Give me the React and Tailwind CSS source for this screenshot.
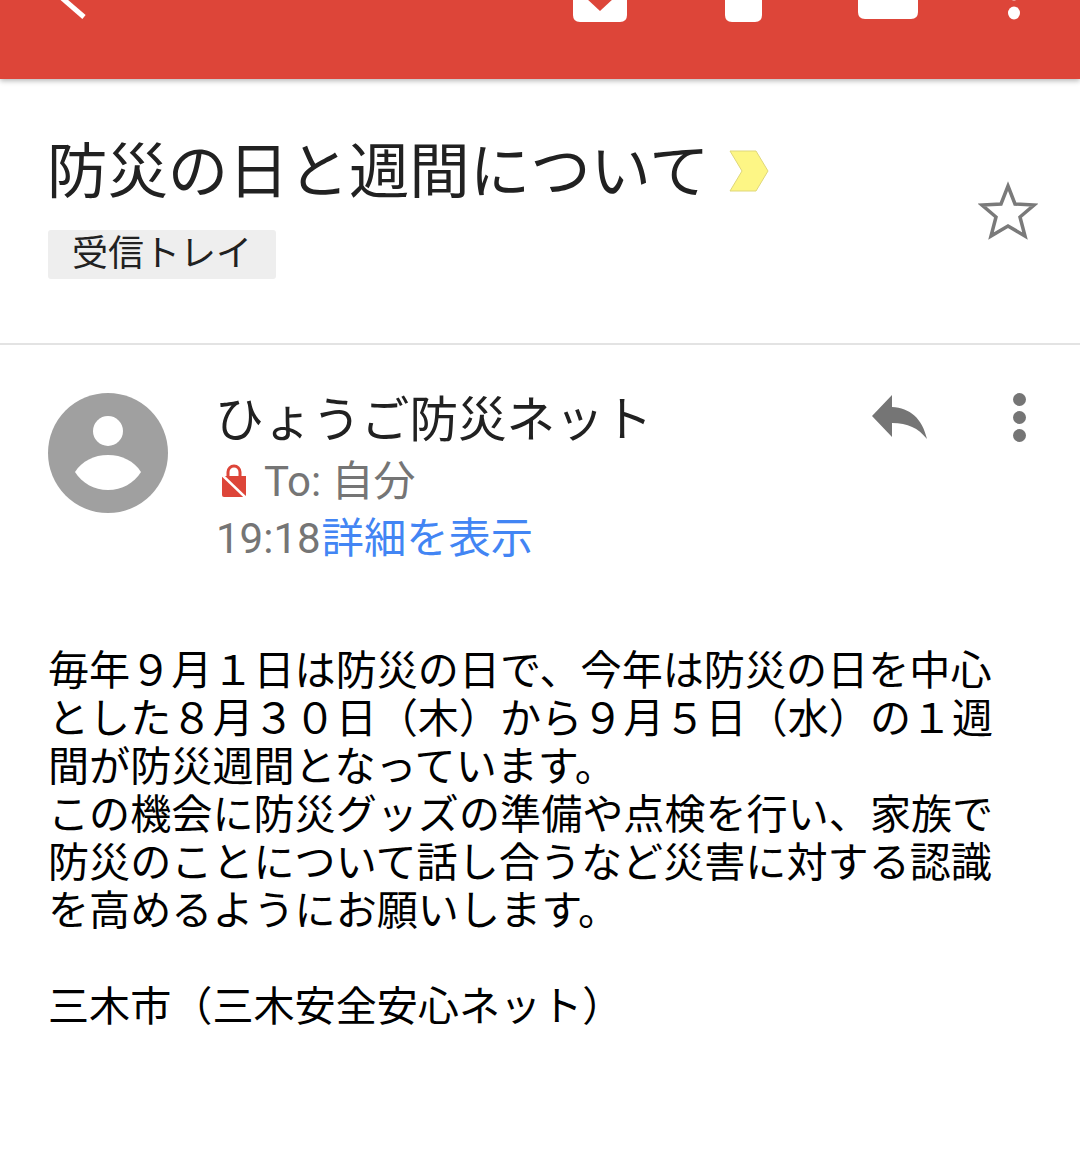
import React from "react";

const FONT = "font-['Roboto','Noto_Sans_CJK_JP',sans-serif]";

function TopIcons() {
  return (
    <svg width="1080" height="79" viewBox="0 0 1080 79" className="block" fill="#fff">
      <path d="M62 -2 L84 17" stroke="#fff" strokeWidth="5" fill="none" />
      <path d="M573 -5 H627 V15 Q627 22 620 22 H580 Q573 22 573 15 Z" />
      <path d="M586 -2 L600 11 L614 -2 Z" fill="#dd4539" />
      <path d="M725 -5 H762 V15 Q762 22 755 22 H732 Q725 22 725 15 Z" />
      <path d="M858 -5 H918 V12 Q918 19 911 19 H865 Q858 19 858 12 Z" />
      <ellipse cx="1014" cy="13" rx="6" ry="6.5" />
      <circle cx="1014" cy="-5.5" r="6" />
    </svg>
  );
}

function Avatar() {
  return (
    <svg width="120" height="120" viewBox="0 0 120 120" className="shrink-0">
      <circle cx="60" cy="60" r="60" fill="#a0a0a0" />
      <circle cx="60" cy="38" r="15" fill="#fff" />
      <path d="M27 79 C34 68 46 62 60 62 C74 62 86 68 93 79 C86 90 74 97 60 97 C46 97 34 90 27 79 Z" fill="#fff" />
    </svg>
  );
}

function LockOff() {
  return (
    <svg width="28" height="34" viewBox="0 0 28 34" className="shrink-0">
      <path d="M2 12 H26 V31 Q26 33 24 33 H4 Q2 33 2 31 Z" fill="#dd4539" />
      <path d="M8 13 V8 A6 6 0 0 1 20 8 V13" fill="none" stroke="#dd4539" strokeWidth="3" />
      <path d="M0 9 L26 34" stroke="#fff" strokeWidth="2.5" />
    </svg>
  );
}

const bodyLines = [
  "毎年９月１日は防災の日で、今年は防災の日を中心",
  "とした８月３０日（木）から９月５日（水）の１週",
  "間が防災週間となっています。",
  "この機会に防災グッズの準備や点検を行い、家族で",
  "防災のことについて話し合うなど災害に対する認識",
  "を高めるようにお願いします。",
  "\u00a0",
  "三木市（三木安全安心ネット）",
];

export default function App() {
  return (
    <div className={`${FONT} w-[1080px] h-[1157px] bg-white overflow-hidden text-[#212121]`}>
      <header className="h-[79px] bg-[#dd4539] shadow-[0_2px_5px_rgba(0,0,0,0.28)] relative">
        <TopIcons />
      </header>

      <section className="h-[266px] border-b-2 border-[#e3e3e3] pl-12 pr-[42px] pt-[55px] flex justify-between">
        <div>
          <div className="flex items-center h-[72px]">
            <h1 className="text-[60.4px] leading-[72px] font-normal whitespace-nowrap -ml-[1px] translate-y-[3px]">防災の日と週間について</h1>
            <svg width="40" height="42" viewBox="0 0 40 42" className="ml-[19px] mt-[2px]">
              <path d="M1 1 H27 L39 21 L27 41 H1 L13 21 Z" fill="#fdf685" stroke="#dfd77a" strokeWidth="1" />
            </svg>
          </div>
          <div className="mt-[24px] w-[228px] h-[49px] bg-[#eeeeee] rounded-[3px] flex items-center justify-center">
            <span className="text-[36px] leading-[48px] whitespace-nowrap -translate-y-[1px]">受信トレイ</span>
          </div>
        </div>
        <svg width="60" height="60" viewBox="0 0 60 60" className="mt-[47px]">
          <path d="M30 5 L37 23 L56 24 L42 36 L47 55 L30 45 L13 55 L18 36 L4 24 L23 23 Z" fill="none" stroke="#7a7a7a" strokeWidth="3.5" />
        </svg>
      </section>

      <section className="pl-12 pr-[54px] pt-[48px] flex">
        <Avatar />
        <div className="ml-[47px] flex-1 -mt-[2px]">
          <div className="text-[48.6px] leading-[60px] whitespace-nowrap">ひょうご防災ネット</div>
          <div className="flex items-center h-[56px] mt-[3px]">
            <span className="ml-[5px] -translate-y-[1px]"><LockOff /></span>
            <span className="ml-[16px] text-[42px] leading-[56px] text-[#757575] whitespace-nowrap">To: 自分</span>
          </div>
          <div className="h-[58px] flex items-center whitespace-nowrap text-[42px] leading-[58px] ml-[1px]">
            <span className="text-[#757575]">19:18</span>
            <span className="text-[#4285f4] text-[42.3px] ml-[1px]">詳細を表示</span>
          </div>
        </div>
        <div className="flex items-start">
          <svg width="56" height="48" viewBox="0 0 56 48" className="-mt-[1px]">
            <path d="M0 24 L20 3 V15 C38 16 50 26 55 47 C46 36 36 31 20 31 V45 Z" fill="#757575" />
          </svg>
          <div className="ml-[85px] flex flex-col gap-[5px]">
            <div className="w-[13px] h-[13px] rounded-full bg-[#757575]" />
            <div className="w-[13px] h-[13px] rounded-full bg-[#757575]" />
            <div className="w-[13px] h-[13px] rounded-full bg-[#757575]" />
          </div>
        </div>
      </section>

      <section className="pl-12 mt-[79px] text-[41.1px] leading-[48px] text-black">
        {bodyLines.map((line, i) => (
          <div key={i} className="whitespace-nowrap">{line}</div>
        ))}
      </section>
    </div>
  );
}
